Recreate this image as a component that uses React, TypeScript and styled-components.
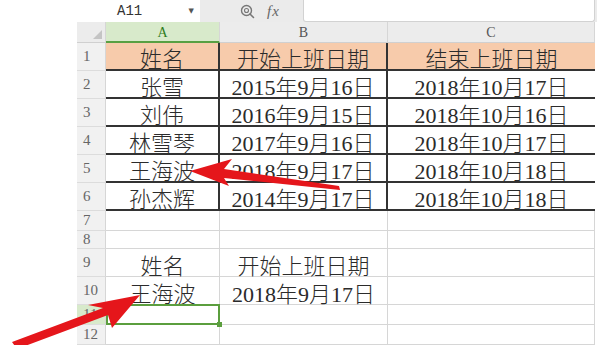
import React from "react";
import styled, { createGlobalStyle, css } from "styled-components";

const GlobalStyle = createGlobalStyle`
  html, body {
    margin: 0;
    padding: 0;
    background: #fff;
  }
`;

type Kind = "head" | "data" | "plain";

interface RowDef {
  n: number;
  h: number;
  kind: Kind;
  cells: [string, string, string];
}

const rows: RowDef[] = [
  { n: 1, h: 28, kind: "head", cells: ["姓名", "开始上班日期", "结束上班日期"] },
  { n: 2, h: 28, kind: "data", cells: ["张雪", "2015年9月16日", "2018年10月17日"] },
  { n: 3, h: 28, kind: "data", cells: ["刘伟", "2016年9月15日", "2018年10月16日"] },
  { n: 4, h: 28, kind: "data", cells: ["林雪琴", "2017年9月16日", "2018年10月17日"] },
  { n: 5, h: 28, kind: "data", cells: ["王海波", "2018年9月17日", "2018年10月18日"] },
  { n: 6, h: 28, kind: "data", cells: ["孙杰辉", "2014年9月17日", "2018年10月18日"] },
  { n: 7, h: 20, kind: "plain", cells: ["", "", ""] },
  { n: 8, h: 18, kind: "plain", cells: ["", "", ""] },
  { n: 9, h: 28, kind: "plain", cells: ["姓名", "开始上班日期", ""] },
  { n: 10, h: 28, kind: "plain", cells: ["王海波", "2018年9月17日", ""] },
  { n: 11, h: 20, kind: "plain", cells: ["", "", ""] },
  { n: 12, h: 20, kind: "plain", cells: ["", "", ""] },
];

const ACTIVE_ROW = 11;

const Page = styled.div`
  position: relative;
  width: 600px;
  height: 345px;
  overflow: hidden;
  display: flex;
  background: #fff;
`;

const Gutter = styled.div`
  width: 77px;
  flex-shrink: 0;
`;

const Workbook = styled.div`
  display: flex;
  flex-direction: column;
  width: 520px;
`;

const FormulaBar = styled.div`
  display: flex;
  align-items: stretch;
  height: 23px;
  background: #ebebeb;
`;

const NameBox = styled.div`
  width: 123px;
  background: #fff;
  display: flex;
  align-items: center;
  justify-content: space-between;
  padding: 0 6px 1px 40px;
  box-sizing: border-box;
  font-family: "Liberation Mono", monospace;
  font-size: 14px;
  color: #333;
`;

const Caret = styled.span`
  font-family: "DejaVu Sans", sans-serif;
  font-size: 7px;
  color: #555;
`;

const Tools = styled.div`
  width: 103px;
  display: flex;
  align-items: center;
  gap: 12px;
  padding-left: 40px;
  box-sizing: border-box;
`;

const Fx = styled.span`
  font-family: "Liberation Serif", serif;
  font-style: italic;
  font-size: 15px;
  color: #666;
  letter-spacing: 1px;
`;

const FormulaInput = styled.div`
  flex: 1;
  margin-right: 2px;
  background: #fff;
  border: 1px solid #d2d2d2;
  border-top: none;
  border-radius: 0 0 3px 3px;
`;

const Grid = styled.div`
  display: grid;
  grid-template-columns: 29px 114px 168px 207px;
`;

const Corner = styled.div`
  height: 21px;
  background: #ececec;
  border-right: 1px solid #d6d6d6;
  border-bottom: 1px solid #d0d0d0;
  box-sizing: border-box;
  display: flex;
  align-items: flex-end;
  justify-content: flex-end;
  padding: 0 3px 3px 0;
`;

const CornerMark = styled.div`
  width: 0;
  height: 0;
  border-left: 9px solid transparent;
  border-bottom: 9px solid #c4c4c4;
`;

const ColHead = styled.div<{ $active?: boolean }>`
  height: 21px;
  box-sizing: border-box;
  display: flex;
  align-items: flex-end;
  justify-content: center;
  padding-bottom: 1px;
  font-family: "Liberation Serif", serif;
  font-size: 14px;
  color: #555;
  background: #ececec;
  border-right: 1px solid #d6d6d6;
  border-bottom: 1px solid #d0d0d0;
  ${(p) =>
    p.$active &&
    css`
      background: #d8eacb;
      color: #2f7d22;
      border-bottom: 2px solid #58a043;
      padding-bottom: 0;
    `}
`;

const RowHead = styled.div<{ $h: number; $active?: boolean }>`
  height: ${(p) => p.$h}px;
  box-sizing: border-box;
  display: flex;
  align-items: center;
  padding-left: 6px;
  font-family: "Liberation Serif", serif;
  font-size: 15px;
  color: #666;
  background: ${(p) => (p.$active ? "#d8eacb" : "#f1f1f1")};
  border-right: 1px solid #d6d6d6;
  border-bottom: 1px solid #dcdcdc;
`;

const Cell = styled.div<{ $h: number; $kind: Kind; $last?: boolean; $selected?: boolean }>`
  position: relative;
  height: ${(p) => p.$h}px;
  box-sizing: border-box;
  display: flex;
  align-items: center;
  justify-content: center;
  padding-top: 2px;
  font-family: "Liberation Serif", "Noto Sans CJK SC", serif;
  font-size: 22px;
  font-weight: 300;
  color: #2b2b2b;
  white-space: nowrap;
  border-bottom: 1px solid #d6d6d6;
  border-right: 1px solid #d6d6d6;
  ${(p) =>
    p.$kind !== "plain" &&
    css`
      border-bottom: 2px solid #333;
      border-right: ${p.$last ? "none" : "2px solid #333"};
    `}
  ${(p) =>
    p.$kind === "head" &&
    css`
      background: #f7cbab;
    `}
  ${(p) =>
    p.$selected &&
    css`
      &::after {
        content: "";
        position: absolute;
        left: 0;
        top: -1px;
        right: -1px;
        bottom: -1px;
        border: 2px solid #5b9e3e;
      }
      &::before {
        content: "";
        position: absolute;
        right: -3px;
        bottom: -3px;
        width: 5px;
        height: 5px;
        background: #5b9e3e;
        z-index: 1;
      }
    `}
`;

const ArrowLayer = styled.svg`
  position: absolute;
  left: 0;
  top: 0;
  pointer-events: none;
`;

const SearchIcon = () => (
  <svg width="15" height="15" viewBox="0 0 15 15" fill="none">
    <circle cx="6.5" cy="6.5" r="5" stroke="#777" strokeWidth="1.4" />
    <circle cx="6.5" cy="6.5" r="2" stroke="#777" strokeWidth="1.1" />
    <path d="M10 10 L13.5 13.5" stroke="#777" strokeWidth="1.6" strokeLinecap="round" />
  </svg>
);

export default function App() {
  return (
    <>
      <GlobalStyle />
      <Page>
        <Gutter />
        <Workbook>
          <FormulaBar>
            <NameBox>
              A11
              <Caret>▼</Caret>
            </NameBox>
            <Tools>
              <SearchIcon />
              <Fx>fx</Fx>
            </Tools>
            <FormulaInput />
          </FormulaBar>
          <Grid>
            <Corner>
              <CornerMark />
            </Corner>
            <ColHead $active>A</ColHead>
            <ColHead>B</ColHead>
            <ColHead>C</ColHead>
            {rows.map((r) => (
              <React.Fragment key={r.n}>
                <RowHead $h={r.h} $active={r.n === ACTIVE_ROW}>
                  {r.n}
                </RowHead>
                {r.cells.map((c, i) => (
                  <Cell
                    key={i}
                    $h={r.h}
                    $kind={r.kind}
                    $last={i === 2}
                    $selected={r.n === ACTIVE_ROW && i === 0}
                  >
                    {c}
                  </Cell>
                ))}
              </React.Fragment>
            ))}
          </Grid>
        </Workbook>
        <ArrowLayer width="600" height="345" viewBox="0 0 600 345">
          <polygon
            points="190,171 232,159 224,169 339,186 340,190 224,178 229,186"
            fill="#e5161b"
          />
          <polygon
            points="140,295 88,305 103,308 12,342 17,349 108,315 112,328"
            fill="#e5161b"
          />
        </ArrowLayer>
      </Page>
    </>
  );
}
